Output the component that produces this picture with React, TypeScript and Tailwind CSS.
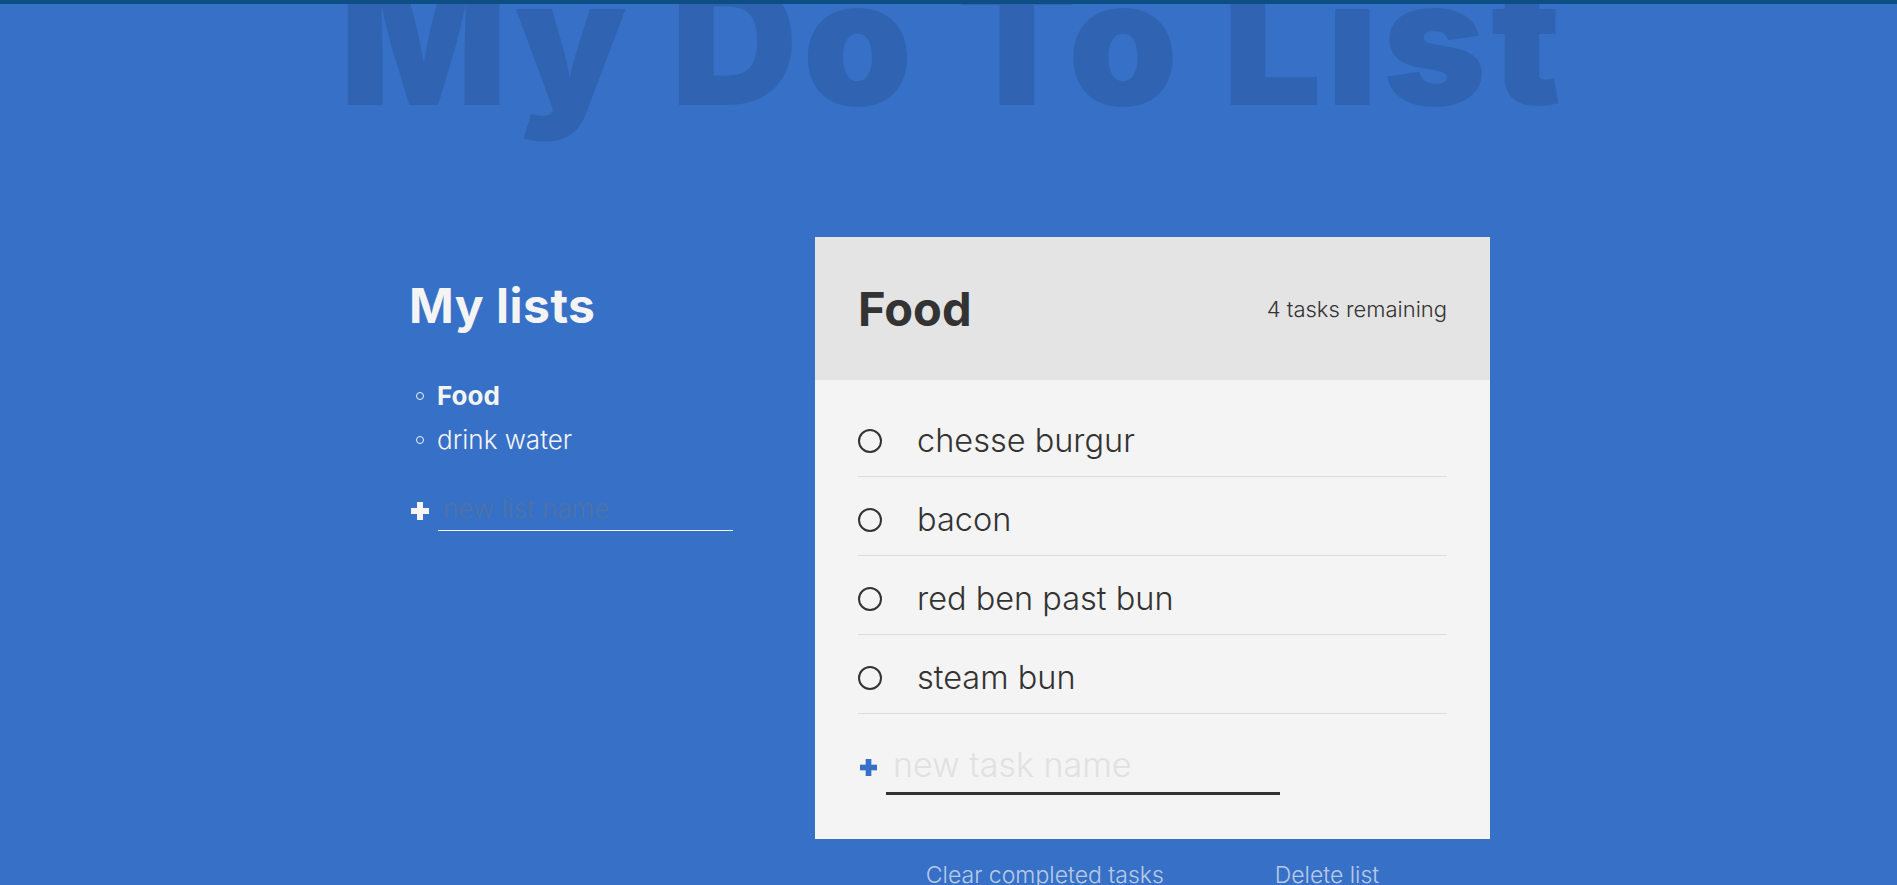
import React from 'react';

const lists = [
  { id: 1, name: 'Food', active: true },
  { id: 2, name: 'drink water', active: false },
];

const tasks = ['chesse burgur', 'bacon', 'red ben past bun', 'steam bun'];

function PlusIcon({ className }: { className?: string }) {
  return (
    <svg viewBox="0 0 18 18" className={className} fill="currentColor">
      <rect x="6" y="0" width="6" height="18" />
      <rect x="0" y="6" width="18" height="6" />
    </svg>
  );
}

export default function App() {
  return (
    <div className="h-[885px] overflow-hidden bg-[#3670c7] font-['Inter','Noto_Sans',sans-serif] font-light text-[#f4f4f4]">
      <div className="h-[4px] bg-[#0d4f85]" />

      {/* big faded title, top is clipped by the bar */}
      <div className="h-[233px] overflow-hidden">
        <h1 className="mt-[-51px] pl-[8px] text-center text-[176px] font-black leading-none tracking-[4.5px] text-black/10">
          My Do To List
        </h1>
      </div>

      <div className="flex pl-[409px]">
        {/* lists column */}
        <div className="w-[406px]">
          <h2 className="mt-[45px] text-[48px] font-bold leading-none tracking-[0.5px]">My lists</h2>
          <ul className="mt-[44px] text-[26px] leading-[44px]">
            {lists.map((l) => (
              <li key={l.id} className="flex items-center">
                <span className="ml-[7px] h-[8px] w-[8px] rounded-full border border-[#f4f4f4]" />
                <span className={`ml-[13px] ${l.active ? 'font-bold' : ''}`}>{l.name}</span>
              </li>
            ))}
          </ul>
          <form className="mt-[29px] flex items-center" onSubmit={(e) => e.preventDefault()}>
            <PlusIcon className="ml-[2px] h-[18px] w-[18px]" />
            <input
              type="text"
              placeholder="new list name"
              className="ml-[9px] h-[40px] w-[295px] border-b border-[#f4f4f4] bg-transparent px-[5px] pb-[6px] pt-[2px] text-[26px] outline-none placeholder:text-[#4f72a6]"
            />
          </form>
        </div>

        {/* active list */}
        <div className="w-[675px]">
          <div className="bg-[#f4f4f4] text-[#333333]">
            <div className="flex h-[143px] items-center justify-between bg-[#e4e4e4] px-[43px]">
              <h2 className="text-[47px] font-bold leading-none">Food</h2>
              <p className="text-[22px] leading-none">4 tasks remaining</p>
            </div>
            <div className="flex flex-col px-[43px] pb-[44px] pt-[40px]">
              {tasks.map((t) => (
                <div key={t} className="mb-[22px] border-b border-[#dddddd] pb-[14px]">
                  <label className="flex h-[42px] items-center">
                    <span className="h-[24px] w-[24px] rounded-full border-[2.5px] border-[#333333]" />
                    <span className="ml-[35px] text-[32.5px] leading-none">{t}</span>
                  </label>
                </div>
              ))}
              <form className="mt-[6px] flex items-center" onSubmit={(e) => e.preventDefault()}>
                <PlusIcon className="mb-[2px] ml-[2px] h-[17px] w-[17px] text-[#3670c7]" />
                <input
                  type="text"
                  placeholder="new task name"
                  className="ml-[9px] h-[53px] w-[394px] border-b-[3px] border-[#333333] bg-transparent px-[7px] pb-[5px] pt-0 text-[34px] leading-[40px] outline-none placeholder:text-[#e1e1e1]"
                />
              </form>
            </div>
          </div>
          <div className="mt-[25px] flex justify-evenly text-[23px] leading-none text-[#f4f4f4]/70">
            <button type="button">Clear completed tasks</button>
            <button type="button">Delete list</button>
          </div>
        </div>
      </div>
    </div>
  );
}
